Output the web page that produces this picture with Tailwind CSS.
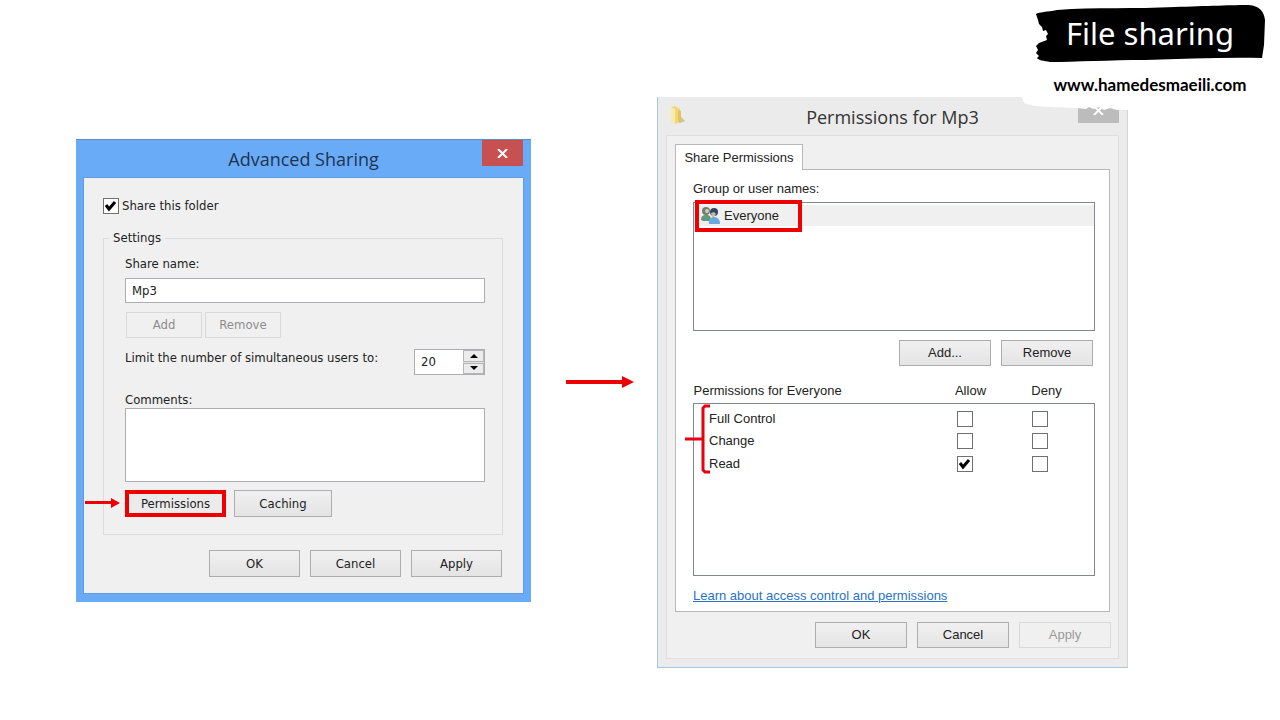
<!DOCTYPE html>
<html lang="en">
<head>
    <meta charset="UTF-8">
    <meta name="viewport" content="width=device-width, initial-scale=1.0">
    <title>File sharing</title>
    <script src="https://cdn.jsdelivr.net/npm/@tailwindcss/browser@4"></script>
</head>
<body class="bg-white text-[#222]">
    <!-- Slide header -->
    <header class="relative z-10 flex justify-end pr-[15px] pt-[5px] h-[97px]">
        <div class="w-[230px] text-center">
            <div class="relative h-[57px]">
                <svg class="absolute inset-0" width="230" height="57" viewBox="0 0 230 57" aria-hidden="true">
                    <path d="M1 9 C4 7 12 7 22 5 C60 2 100 4 140 2 C170 1 200 0 214 0 C224 1 229 6 230 15 L229 40 L227 53 C190 52 150 54 110 55 C75 55 40 57 15 57 C9 56 3 55 2 53 L4 51 L1 48 L3 45 L1 41 L4 38 L12 35 L11 31 L13 29 L11 25 L8 26 L7 22 L4 19 L3 15 Z" fill="#000"/>
                </svg>
                <h1 class="relative font-['Noto_Sans',sans-serif] text-[31px] leading-[56px] text-white">File sharing</h1>
            </div>
            <p class="mt-[13px] font-['Lato',sans-serif] text-[17px] leading-5 font-bold text-black">www.hamedesmaeili.com</p>
        </div>
        <!-- Torn paper edge that hangs over the dialog -->
        <svg class="absolute right-[140px] top-[97px]" width="118" height="13" viewBox="0 0 118 13" aria-hidden="true">
            <path d="M0 0 L2 6 C8 9 20 10 55 11 L64 12 L67 10 L71 12 L77 10 L82 13 L88 11 L95 13 L118 13 L118 0 Z" fill="#fff"/>
        </svg>
    </header>

    <main class="grid grid-cols-[455fr_126fr_471fr] items-start pl-[76px] pr-[152px] pb-[52px]">
        <!-- Advanced Sharing -->
        <section class="mt-[42px] border-t border-[#5a8dc4] bg-[#6aabf7] px-2 pb-[9px] font-['DejaVu_Sans_Condensed','DejaVu_Sans',sans-serif] text-[13px] leading-[18px]">
            <div class="relative h-[38px]">
                <h2 class="pt-[7px] text-center font-['Open_Sans',sans-serif] text-[18px] leading-[24px] text-[#1e3450]">Advanced Sharing</h2>
                <button class="absolute right-0 top-0 flex h-[26px] w-[41px] items-center justify-center bg-[#c75050]" aria-label="Close">
                    <svg width="11" height="9" viewBox="0 0 11 9" stroke="#fff" stroke-width="2"><path d="M1 0 L10 9 M10 0 L1 9"/></svg>
                </button>
            </div>
            <div class="bg-[#f0f0f0] pt-[18px] pr-5 pb-4 pl-[19px] outline outline-[#5f9ce3]">
                <label class="flex h-5 items-center gap-[3px]">
                    <span class="grid">
                        <input type="checkbox" checked class="peer col-start-1 row-start-1 size-4 appearance-none border border-[#707070] bg-white">
                        <svg class="invisible col-start-1 row-start-1 size-4 peer-checked:visible" viewBox="0 0 16 16" fill="none" stroke="#000" stroke-width="3"><path d="M3 7 L6 11 L12 4"/></svg>
                    </span>
                    Share this folder
                </label>

                <fieldset class="mt-[13px] border border-[#dcdcdc] pt-2 pr-[17px] pb-[17px] pl-[21px]">
                    <legend class="-ml-4 px-1">Settings</legend>
                    <label for="share-name" class="block">Share name:</label>
                    <input id="share-name" type="text" value="Mp3" class="mt-[5px] block h-[25px] w-full border border-[#abadb3] bg-white px-[6px]">
                    <div class="mt-[9px] flex gap-[3px] pl-px">
                        <button disabled class="h-[26px] w-[76px] border border-[#d9d9d9] text-[#8d8d8d]">Add</button>
                        <button disabled class="h-[26px] w-[76px] border border-[#d9d9d9] text-[#8d8d8d]">Remove</button>
                    </div>
                    <div class="mt-[11px] flex items-start justify-between">
                        <label for="user-limit">Limit the number of simultaneous users to:</label>
                        <div class="flex h-[26px] w-[71px] border border-[#abadb3] bg-white">
                            <input id="user-limit" type="text" value="20" class="w-[48px] px-[6px]">
                            <div class="flex w-[21px] flex-col gap-px bg-[#e4e4e4]">
                                <button class="flex flex-1 items-center justify-center border border-[#b5b5b5] bg-[#ececec]" aria-label="More">
                                    <svg width="8" height="4" viewBox="0 0 8 4"><path d="M0 4 L4 0 L8 4 Z"/></svg>
                                </button>
                                <button class="flex flex-1 items-center justify-center border border-[#b5b5b5] bg-[#ececec]" aria-label="Fewer">
                                    <svg width="8" height="4" viewBox="0 0 8 4"><path d="M0 0 L4 4 L8 0 Z"/></svg>
                                </button>
                            </div>
                        </div>
                    </div>
                    <label for="comments" class="mt-4 block h-[17px]">Comments:</label>
                    <textarea id="comments" class="block h-[74px] w-full resize-none border border-[#abadb3] bg-white"></textarea>
                    <div class="relative mt-2 flex gap-2">
                        <svg class="absolute -left-10 top-2" width="35" height="10" viewBox="0 0 35 10" fill="#ee0000" aria-hidden="true"><path d="M0 3 H26 V0 L35 5 L26 10 V6 H0 Z"/></svg>
                        <button class="h-[27px] w-[101px] border-4 border-[#ee0000] bg-[#ebebeb] leading-[16px]">Permissions</button>
                        <button class="h-[27px] w-[98px] border border-[#adadad] bg-linear-to-b from-[#f0f0f0] to-[#e4e4e4]">Caching</button>
                    </div>
                </fieldset>

                <div class="mt-[15px] flex justify-end gap-[10px] pr-px">
                    <button class="h-[27px] w-[91px] border border-[#adadad] bg-linear-to-b from-[#f0f0f0] to-[#e4e4e4]">OK</button>
                    <button class="h-[27px] w-[91px] border border-[#adadad] bg-linear-to-b from-[#f0f0f0] to-[#e4e4e4]">Cancel</button>
                    <button class="h-[27px] w-[91px] border border-[#adadad] bg-linear-to-b from-[#f0f0f0] to-[#e4e4e4]">Apply</button>
                </div>
            </div>
        </section>

        <!-- Arrow between the two dialogs -->
        <svg class="ml-3 self-center justify-self-center" width="68" height="12" viewBox="0 0 68 12" fill="#ee0000" aria-hidden="true"><path d="M0 4 H56 V0 L68 6 L56 12 V8 H0 Z"/></svg>

        <!-- Permissions for Mp3 -->
        <section class="border border-t-0 border-[#a5c8e0] border-r-[#d4d4d4] bg-[#ebebeb] px-2 pb-2 font-['Liberation_Sans',sans-serif] text-[13px] leading-[18px]">
            <div class="relative h-[38px]">
                <svg class="absolute left-[4px] top-[9px]" width="16" height="18" viewBox="0 0 16 18" aria-hidden="true">
                    <path d="M1 1 L5 0 L10 3 L10 16 L5 18 L1 15 Z" fill="#efd67a"/>
                    <path d="M1 1 L5 3 L5 18 L1 15 Z" fill="#f8ebae"/>
                    <path d="M8 4 L11 5 L11 11 L15 15 L9 17 L8 14 Z" fill="#e3c35c"/>
                    <path d="M11 12 L15 15 L10 17 Z" fill="#c9c6a4"/>
                </svg>
                <h2 class="pt-2 text-center font-['Open_Sans',sans-serif] text-[18px] leading-[24px] text-[#333]">Permissions for Mp3</h2>
                <button class="absolute right-0 top-0 flex h-[26px] w-[41px] items-center justify-center bg-[#bcbcbc]" aria-label="Close">
                    <svg width="11" height="9" viewBox="0 0 11 9" stroke="#fff" stroke-width="2"><path d="M1 0 L10 9 M10 0 L1 9"/></svg>
                </button>
            </div>
            <div class="border border-[#dfdfdf] bg-[#f0f0f0] px-2 pt-2 pb-[10px]">
                <button role="tab" class="relative z-10 -mb-px block h-[26px] w-[128px] border border-b-0 border-[#b8b8b8] bg-white">Share Permissions</button>
                <div class="border border-[#b8b8b8] bg-white pt-[10px] pr-[14px] pb-[6px] pl-[17px]">
                    <p>Group or user names:</p>
                    <div class="relative mt-1 h-[129px] border border-[#828790] pt-[2px]">
                        <div class="flex h-[21px] items-center gap-1 bg-[#f0f0f0] pl-[7px]">
                            <svg width="19" height="19" viewBox="0 0 19 19" aria-hidden="true">
                                <path d="M0 14 C0 9 3 9 6 9 C9 9 10 11 10 15 L2 15 Z" fill="#5f9b78"/>
                                <circle cx="5" cy="5" r="4" fill="#6e7f6c"/>
                                <circle cx="6" cy="5" r="2" fill="#d5cdb5"/>
                                <path d="M8 18 C7 13 10 11 13 11 C17 11 19 14 19 18 Z" fill="#6ca9de"/>
                                <circle cx="13" cy="6" r="4" fill="#31475e"/>
                                <path d="M10 7 L13 6 L15 8 L13 11 L11 11 Z" fill="#c5bba8"/>
                            </svg>
                            <span>Everyone</span>
                        </div>
                        <div class="absolute left-px -top-[3px] h-8 w-[107px] border-4 border-[#ee0000]"></div>
                    </div>
                    <div class="mt-[9px] flex justify-end gap-[10px] pr-[2px]">
                        <button class="h-[26px] w-[92px] border border-[#adadad] bg-linear-to-b from-[#f0f0f0] to-[#e4e4e4]">Add...</button>
                        <button class="h-[26px] w-[92px] border border-[#adadad] bg-linear-to-b from-[#f0f0f0] to-[#e4e4e4]">Remove</button>
                    </div>

                    <div class="relative mt-4">
                        <table class="w-full border-collapse">
                            <thead>
                                <tr class="h-[21px] align-top">
                                    <th class="text-left font-normal">Permissions for Everyone</th>
                                    <th class="w-[76px] pl-3 font-normal">Allow</th>
                                    <th class="w-[92px] pr-1 font-normal">Deny</th>
                                </tr>
                            </thead>
                            <tbody class="border border-[#828790]">
                                <tr class="h-[27px] align-bottom">
                                    <td class="pb-[2px] pl-[15px]">Full Control</td>
                                    <td class="pb-[3px]"><input type="checkbox" aria-label="Allow Full Control" class="mx-auto block size-4 appearance-none border border-[#707070] bg-white"></td>
                                    <td class="pr-4 pb-[3px]"><input type="checkbox" aria-label="Deny Full Control" class="mx-auto block size-4 appearance-none border border-[#707070] bg-white"></td>
                                </tr>
                                <tr class="h-[22px] align-bottom">
                                    <td class="pb-[2px] pl-[15px]">Change</td>
                                    <td class="pb-[3px]"><input type="checkbox" aria-label="Allow Change" class="mx-auto block size-4 appearance-none border border-[#707070] bg-white"></td>
                                    <td class="pr-4 pb-[3px]"><input type="checkbox" aria-label="Deny Change" class="mx-auto block size-4 appearance-none border border-[#707070] bg-white"></td>
                                </tr>
                                <tr class="h-[123px] align-top">
                                    <td class="pt-[3px] pl-[15px]">Read</td>
                                    <td class="pt-1">
                                        <div class="mx-auto grid w-4">
                                            <input type="checkbox" checked aria-label="Allow Read" class="peer col-start-1 row-start-1 size-4 appearance-none border border-[#707070] bg-white">
                                            <svg class="invisible col-start-1 row-start-1 size-4 peer-checked:visible" viewBox="0 0 16 16" fill="none" stroke="#000" stroke-width="3"><path d="M3 7 L6 11 L12 4"/></svg>
                                        </div>
                                    </td>
                                    <td class="pt-1 pr-4"><input type="checkbox" aria-label="Deny Read" class="mx-auto block size-4 appearance-none border border-[#707070] bg-white"></td>
                                </tr>
                            </tbody>
                        </table>
                        <svg class="absolute -left-2 top-[22px]" width="26" height="70" viewBox="0 0 26 70" fill="none" stroke="#e60012" stroke-width="3" aria-hidden="true"><path d="M25 2 H20 L18 4 V66 L20 68 H25 M0 35 H18"/></svg>
                    </div>
                    <a href="#" class="mt-[11px] inline-block text-[#2a72c8] underline">Learn about access control and permissions</a>
                </div>
                <div class="mt-[10px] -mr-px flex justify-end gap-[10px]">
                    <button class="h-[26px] w-[92px] border border-[#adadad] bg-linear-to-b from-[#f0f0f0] to-[#e4e4e4]">OK</button>
                    <button class="h-[26px] w-[92px] border border-[#adadad] bg-linear-to-b from-[#f0f0f0] to-[#e4e4e4]">Cancel</button>
                    <button disabled class="h-[26px] w-[92px] border border-[#d9d9d9] text-[#9a9a9a]">Apply</button>
                </div>
            </div>
        </section>
    </main>
</body>
</html>
